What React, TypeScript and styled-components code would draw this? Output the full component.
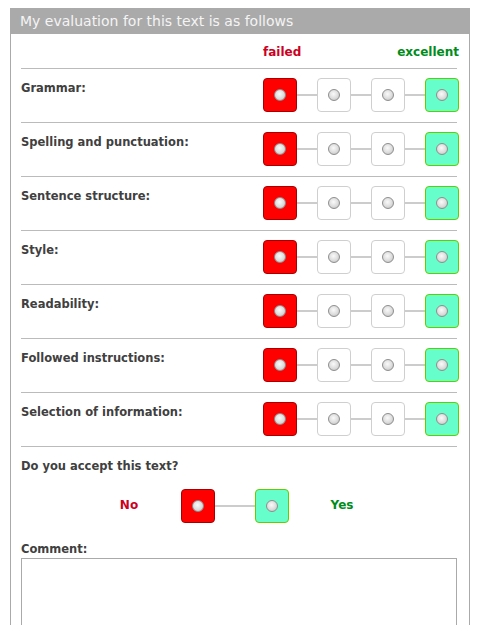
import { Fragment, FunctionComponent } from 'react';
import styled, { createGlobalStyle } from 'styled-components';

const GlobalStyle = createGlobalStyle`
  body {
    margin: 0;
    background: #fff;
    font-family: Tahoma, 'DejaVu Sans', Verdana, sans-serif;
  }
`;

type Tone = 'bad' | 'good' | 'plain';

const criteria = [
  'Grammar:',
  'Spelling and punctuation:',
  'Sentence structure:',
  'Style:',
  'Readability:',
  'Followed instructions:',
  'Selection of information:',
];

const Panel = styled.div`
  margin: 8px 11px 0 10px;
  border: 1px solid #aaa;
  border-top: none;
  min-height: 700px;
`;

const Header = styled.div`
  background: #aaa;
  color: #f4f4f4;
  font-size: 14px;
  height: 26px;
  line-height: 26px;
  padding-left: 9px;
`;

const Body = styled.div`
  padding: 0 12px 0 10px;
`;

const ScaleHead = styled.div`
  display: flex;
  justify-content: flex-end;
  padding: 11px 0 9px;
  border-bottom: 1px solid #bbb;
`;

const HeadLabels = styled.div`
  display: flex;
  justify-content: space-between;
  width: 196px;
  margin-right: -2px;
  font-size: 12px;
  font-weight: bold;
  line-height: 14px;
`;

const ToneText = styled.span<{ $tone: Tone }>`
  color: ${({ $tone }) => ($tone === 'bad' ? '#cc0022' : '#008c1a')};
`;

const Row = styled.div`
  display: flex;
  justify-content: space-between;
  align-items: flex-start;
  padding: 9px 0 10px;
  border-bottom: 1px solid #bbb;
`;

const Label = styled.div`
  color: #404040;
  font-size: 11.5px;
  font-weight: bold;
  line-height: 16px;
  padding-top: 2px;
`;

const Scale = styled.div<{ $shift?: number }>`
  display: flex;
  align-items: center;
  flex-shrink: 0;
  margin-right: ${({ $shift = 0 }) => -$shift}px;
`;

const Connector = styled.div<{ $w: number }>`
  flex-shrink: 0;
  width: ${({ $w }) => $w}px;
  height: 2px;
  background: #ccc;
`;

const Box = styled.div<{ $tone: Tone }>`
  box-sizing: border-box;
  flex-shrink: 0;
  width: 34px;
  height: 34px;
  border-radius: 4px;
  display: flex;
  align-items: center;
  justify-content: center;
  border: 1px solid
    ${({ $tone }) =>
      $tone === 'bad' ? '#a80000' : $tone === 'good' ? '#66cc00' : '#cfcfcf'};
  background: ${({ $tone }) =>
    $tone === 'bad' ? '#ff0000' : $tone === 'good' ? '#66ffcc' : '#fff'};
`;

const Dot = styled.span`
  box-sizing: border-box;
  width: 12px;
  height: 12px;
  border-radius: 50%;
  border: 1px solid #8e8e8e;
  background: radial-gradient(circle at 45% 40%, #fafafa 0%, #dcdcdc 55%, #b8b8b8 100%);
`;

const Question = styled.div`
  color: #404040;
  font-size: 11.5px;
  font-weight: bold;
  line-height: 16px;
  padding-top: 11px;
`;

const AcceptRow = styled.div`
  display: flex;
  align-items: center;
  margin: 15px 0 0 73px;
`;

const AnswerText = styled(ToneText)`
  width: 70px;
  text-align: center;
  font-size: 12px;
  font-weight: bold;
  margin-top: -2px;
`;

const AcceptScale = styled(Scale)`
  margin: 0 18px 0 17px;
`;

const Comment = styled.label`
  display: block;
  color: #404040;
  font-size: 11.5px;
  font-weight: bold;
  line-height: 16px;
  margin-top: 18px;
`;

const CommentBox = styled.textarea`
  display: block;
  box-sizing: border-box;
  width: 100%;
  height: 120px;
  margin-top: 1px;
  border: 1px solid #aaa;
  resize: none;
`;

const RadioBox: FunctionComponent<{ tone: Tone }> = ({ tone }) => (
  <Box $tone={tone}>
    <Dot />
  </Box>
);

const tones: Tone[] = ['bad', 'plain', 'plain', 'good'];

const App = () => (
  <>
    <GlobalStyle />
    <Panel>
      <Header>My evaluation for this text is as follows</Header>
      <Body>
        <ScaleHead>
          <HeadLabels>
            <ToneText $tone="bad">failed</ToneText>
            <ToneText $tone="good">excellent</ToneText>
          </HeadLabels>
        </ScaleHead>
        {criteria.map((c) => (
          <Row key={c}>
            <Label>{c}</Label>
            <Scale $shift={2}>
              {tones.map((t, i) => (
                <Fragment key={i}>
                  {i > 0 && <Connector $w={20} />}
                  <RadioBox tone={t} />
                </Fragment>
              ))}
            </Scale>
          </Row>
        ))}
        <Question>Do you accept this text?</Question>
        <AcceptRow>
          <AnswerText $tone="bad">No</AnswerText>
          <AcceptScale>
            <RadioBox tone="bad" />
            <Connector $w={40} />
            <RadioBox tone="good" />
          </AcceptScale>
          <AnswerText $tone="good">Yes</AnswerText>
        </AcceptRow>
        <Comment>Comment:</Comment>
        <CommentBox />
      </Body>
    </Panel>
  </>
);

export default App;
